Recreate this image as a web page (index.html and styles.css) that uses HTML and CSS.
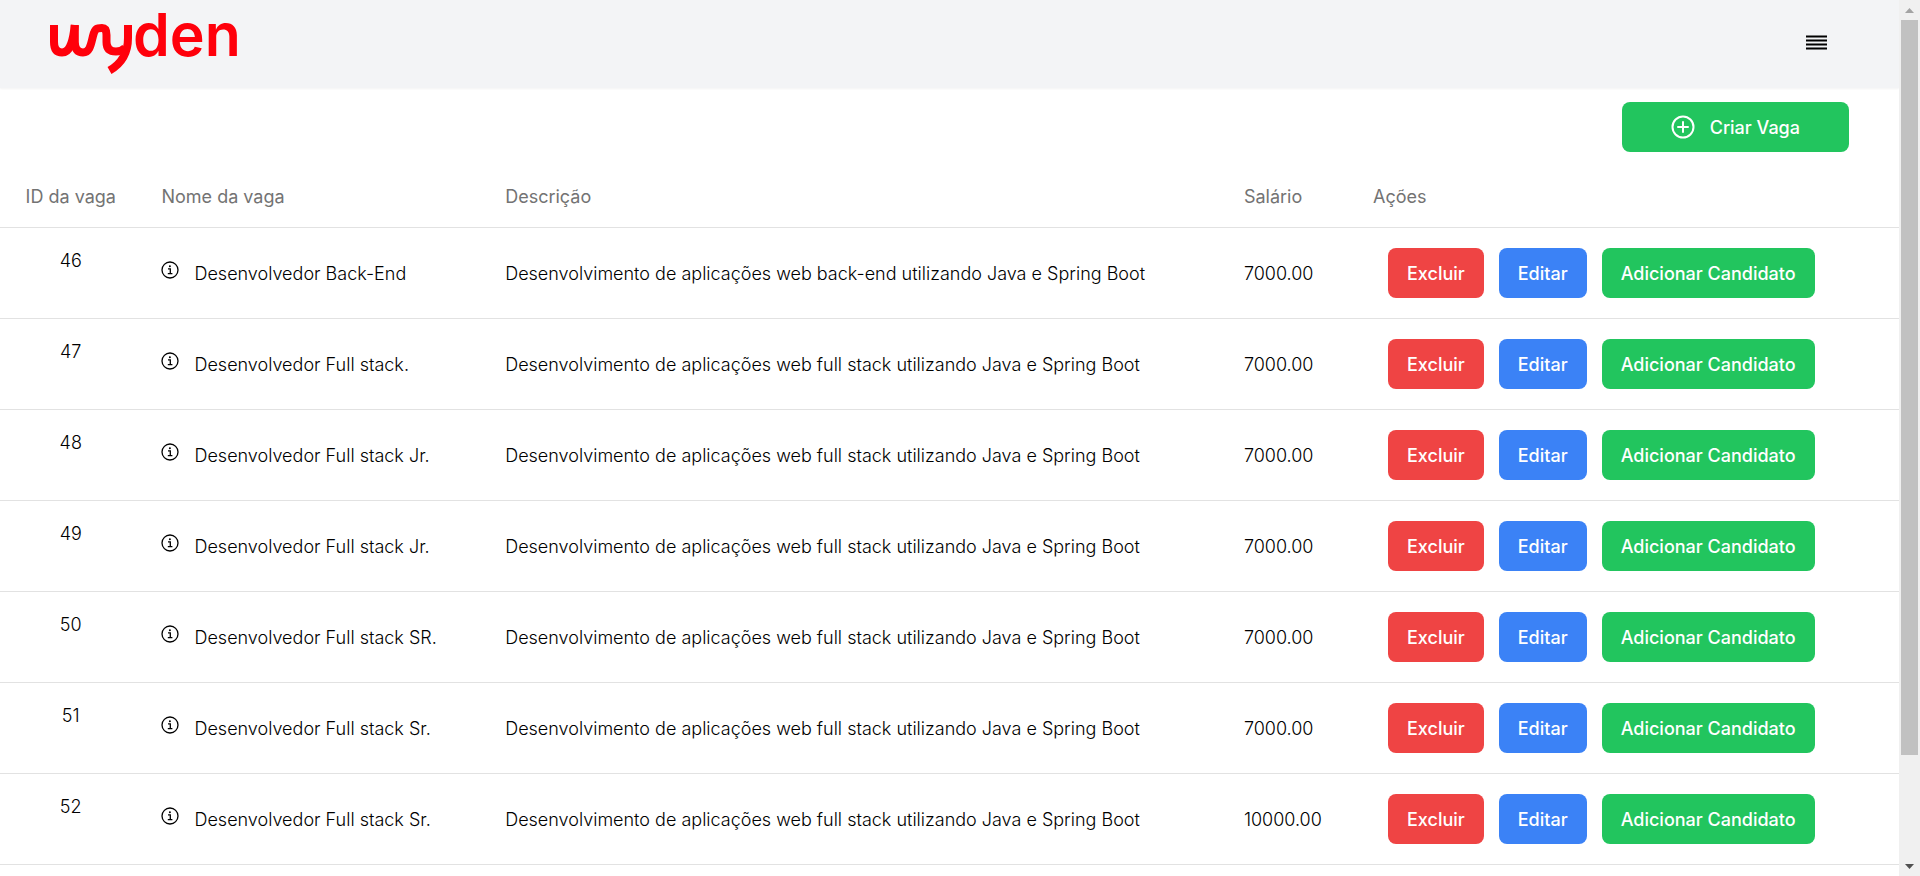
FILE: index.html
```html
<!DOCTYPE html>
<html lang="pt-BR">
<head>
<meta charset="utf-8">
<meta name="viewport" content="width=device-width, initial-scale=1">
<title>Vagas</title>
<link rel="stylesheet" href="styles.css">
</head>
<body>
<svg class="sprite" aria-hidden="true">
  <symbol id="info" viewBox="0 0 18 18">
    <circle cx="9" cy="9" r="8" fill="none" stroke="currentColor" stroke-width="1.3"/>
    <path d="M7 7.8h2.3V12.6M6.8 12.7h4.6" fill="none" stroke="currentColor" stroke-width="1.3"/>
    <circle cx="8.9" cy="5.2" r="1" fill="currentColor"/>
  </symbol>
</svg>
<div class="page">
  <header class="topbar">
    <a class="logo" href="#" aria-label="wyden">
      <svg width="194" height="88" viewBox="49 0 194 88">
        <g fill="none" stroke="currentColor" stroke-width="8">
          <path d="M54 25V42Q54 52.500 62 52.500C70 52.500 73 42 74.800 25"/>
          <path d="M74.800 25V42Q75 52.500 83 52.500C90 52.500 91 44 93 36S97 28 102 28Q106.500 28 106.500 35V42Q106.500 51.500 116 51.500Q121 51.500 125 48"/>
          <path d="M128 25V38Q128 60 109.500 70.500"/>
        </g>
        <text class="logo-text" x="133" y="56">den</text>
      </svg>
    </a>
    <button class="menu" type="button" aria-label="Menu">
      <svg width="21" height="16" viewBox="0 0 21 16"><path d="M0 1.500h21M0 5.500h21M0 9.500h21M0 13.500h21" stroke="currentColor" stroke-width="2"/></svg>
    </button>
  </header>
  <main>
    <div class="toolbar">
      <button class="btn green create" type="button">
        <svg width="24" height="24" viewBox="0 0 24 24" fill="none" stroke="currentColor" stroke-width="2"><circle cx="12" cy="12" r="10.500"/><path d="M12 7v10M7 12h10" stroke-linecap="round"/></svg>
        Criar Vaga
      </button>
    </div>
    <table class="jobs">
      <colgroup><col class="c-id"><col class="c-name"><col class="c-desc"><col class="c-pay"><col></colgroup>
      <thead>
        <tr><th class="id">ID da vaga</th><th>Nome da vaga</th><th>Descrição</th><th>Salário</th><th>Ações</th></tr>
      </thead>
      <tbody>
        <tr><td class="id">46</td><td><svg class="info"><use href="#info"/></svg>Desenvolvedor Back-End</td><td>Desenvolvimento de aplicações web back-end utilizando Java e Spring Boot</td><td>7000.00</td><td><div class="actions"><button class="btn red" type="button">Excluir</button><button class="btn blue" type="button">Editar</button><button class="btn green" type="button">Adicionar Candidato</button></div></td></tr>
        <tr><td class="id">47</td><td><svg class="info"><use href="#info"/></svg>Desenvolvedor Full stack.</td><td>Desenvolvimento de aplicações web full stack utilizando Java e Spring Boot</td><td>7000.00</td><td><div class="actions"><button class="btn red" type="button">Excluir</button><button class="btn blue" type="button">Editar</button><button class="btn green" type="button">Adicionar Candidato</button></div></td></tr>
        <tr><td class="id">48</td><td><svg class="info"><use href="#info"/></svg>Desenvolvedor Full stack Jr.</td><td>Desenvolvimento de aplicações web full stack utilizando Java e Spring Boot</td><td>7000.00</td><td><div class="actions"><button class="btn red" type="button">Excluir</button><button class="btn blue" type="button">Editar</button><button class="btn green" type="button">Adicionar Candidato</button></div></td></tr>
        <tr><td class="id">49</td><td><svg class="info"><use href="#info"/></svg>Desenvolvedor Full stack Jr.</td><td>Desenvolvimento de aplicações web full stack utilizando Java e Spring Boot</td><td>7000.00</td><td><div class="actions"><button class="btn red" type="button">Excluir</button><button class="btn blue" type="button">Editar</button><button class="btn green" type="button">Adicionar Candidato</button></div></td></tr>
        <tr><td class="id">50</td><td><svg class="info"><use href="#info"/></svg>Desenvolvedor Full stack SR.</td><td>Desenvolvimento de aplicações web full stack utilizando Java e Spring Boot</td><td>7000.00</td><td><div class="actions"><button class="btn red" type="button">Excluir</button><button class="btn blue" type="button">Editar</button><button class="btn green" type="button">Adicionar Candidato</button></div></td></tr>
        <tr><td class="id">51</td><td><svg class="info"><use href="#info"/></svg>Desenvolvedor Full stack Sr.</td><td>Desenvolvimento de aplicações web full stack utilizando Java e Spring Boot</td><td>7000.00</td><td><div class="actions"><button class="btn red" type="button">Excluir</button><button class="btn blue" type="button">Editar</button><button class="btn green" type="button">Adicionar Candidato</button></div></td></tr>
        <tr><td class="id">52</td><td><svg class="info"><use href="#info"/></svg>Desenvolvedor Full stack Sr.</td><td>Desenvolvimento de aplicações web full stack utilizando Java e Spring Boot</td><td>10000.00</td><td><div class="actions"><button class="btn red" type="button">Excluir</button><button class="btn blue" type="button">Editar</button><button class="btn green" type="button">Adicionar Candidato</button></div></td></tr>
      </tbody>
    </table>
  </main>
</div>
<div class="scrollbar" aria-hidden="true">
  <svg class="arrow up" width="9" height="5" viewBox="0 0 9 5"><path d="M4.500 0L9 5H0z"/></svg>
  <div class="track"><div class="thumb"></div></div>
  <svg class="arrow down" width="9" height="5" viewBox="0 0 9 5"><path d="M4.500 5L9 0H0z"/></svg>
</div>
</body>
</html>
```
FILE: styles.css
```css
* {
  box-sizing: border-box;
}

body {
  margin: 0;
  display: flex;
  height: 100vh;
  overflow: hidden;
  background: #fff;
  color: #000;
  font: 300 18px/25px Inter, "Noto Sans", sans-serif;
}

button {
  border: 0;
  font: inherit;
  color: inherit;
  cursor: pointer;
}

.sprite {
  position: absolute;
  width: 0;
  height: 0;
}

.page {
  flex: 1;
  min-width: 0;
}

.topbar {
  display: flex;
  justify-content: space-between;
  align-items: flex-start;
  height: 88px;
  padding: 0 72px 0 49px;
  background: #f3f4f6;
  box-shadow: 0 1px 2px rgba(0, 0, 0, 0.05);
}

.logo {
  color: #ff000b;
}

.logo svg,
.menu svg {
  display: block;
  overflow: visible;
}

.logo-text {
  font: 600 59px Inter, sans-serif;
  fill: currentColor;
}

.menu {
  padding: 0;
  margin-top: 35px;
  background: none;
}

.toolbar {
  display: flex;
  justify-content: flex-end;
  padding: 14px 50px 10px;
}

.btn {
  height: 50px;
  padding: 0 19px;
  border-radius: 8px;
  color: #fff;
  font-weight: 500;
  white-space: nowrap;
}

.red {
  background: #ef4444;
}

.blue {
  background: #3b82f6;
}

.green {
  background: #22c55e;
}

.create {
  display: flex;
  align-items: center;
  gap: 15px;
  padding: 0 49px;
}

.jobs {
  width: 100%;
  border-collapse: collapse;
  text-align: left;
}

.c-id {
  width: 7.45%;
}

.c-name {
  width: 18.1%;
}

.c-desc {
  width: 38.9%;
}

.c-pay {
  width: 6.8%;
}

.jobs th,
.jobs td {
  padding: 20px;
  white-space: nowrap;
}

.jobs th {
  padding: 22px 20px 18px;
  color: #737373;
  font-weight: 400;
}

.jobs tr {
  border-bottom: 1px solid #e2e2e2;
}

.jobs .id {
  text-align: center;
  vertical-align: top;
}

.info {
  width: 18px;
  height: 18px;
  margin-right: 15px;
  vertical-align: 1px;
}

.actions {
  display: flex;
  gap: 15px;
  padding-left: 15px;
}

.scrollbar {
  display: flex;
  flex-direction: column;
  align-items: center;
  justify-content: space-between;
  width: 21px;
  padding: 8px 2px 7px;
  background: #f0f0f0;
}

.arrow {
  fill: #a3a3a3;
}

.down {
  fill: #505050;
}

.track {
  flex: 1;
  width: 100%;
  margin: 7px 0 8px;
}

.thumb {
  height: 87.9%;
  background: #c1c1c1;
}
```
